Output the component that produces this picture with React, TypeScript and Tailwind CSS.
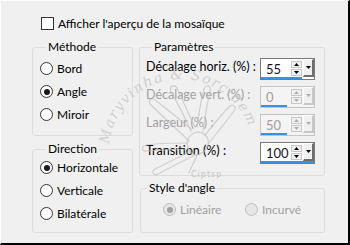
import React from "react";

type RadioProps = { label: string; checked?: boolean; disabled?: boolean };

function Radio({ label, checked, disabled }: RadioProps) {
  return (
    <div className="flex h-[23px] items-center gap-[4px]">
      <span
        className={
          "flex h-[13px] w-[13px] shrink-0 items-center justify-center rounded-full border " +
          (disabled ? "border-[#bcbcbc] bg-[#e6e6e6]" : "border-[#333] bg-white")
        }
      >
        {checked && (
          <span
            className={
              "h-[6px] w-[6px] rounded-full " +
              (disabled ? "bg-[#a0a0a0]" : "bg-[#1a1a1a]")
            }
          />
        )}
      </span>
      <span className={disabled ? "text-[#a0a0a0]" : "text-black"}>{label}</span>
    </div>
  );
}

type GroupProps = { title: string; className: string; children: React.ReactNode };

function Group({ title, className, children }: GroupProps) {
  return (
    <fieldset className={"rounded-[3px] border border-[#dcdcdc] " + className}>
      <legend className="ml-[6px] px-[2px] leading-[14px]">{title}</legend>
      {children}
    </fieldset>
  );
}

type SpinProps = { value: string; bar: number; disabled?: boolean };

function Spin({ value, bar, disabled }: SpinProps) {
  const tri = disabled ? "#b0b0b0" : "#000";
  return (
    <div
      className={
        "flex h-[22px] w-[55px] shrink-0 flex-col border " +
        (disabled ? "border-[#c4c4c4] bg-[#f4f4f4]" : "border-[#7a7a7a] bg-white")
      }
    >
      <div className="flex h-[18px] items-center">
        <span
          className={
            "flex-1 pl-[5px] pt-[2px] text-[13px] leading-[14px] " +
            (disabled ? "text-[#a89c94]" : "text-[#1a1030]")
          }
        >
          {value}
        </span>
        <div className="mr-[1px] flex h-[17px] w-[11px] flex-col justify-center gap-[1px]">
          <div className="flex h-[7px] items-center justify-center border border-[#c8c8c8] bg-[#f0f0f0]">
            <svg width="5" height="3" viewBox="0 0 5 3">
              <path d="M2.5 0 L5 3 L0 3 Z" fill={tri} />
            </svg>
          </div>
          <div className="flex h-[7px] items-center justify-center border border-[#c8c8c8] bg-[#f0f0f0]">
            <svg width="5" height="3" viewBox="0 0 5 3">
              <path d="M0 0 L5 0 L2.5 3 Z" fill={tri} />
            </svg>
          </div>
        </div>
        <div
          className={
            "flex h-[18px] w-[11px] items-center justify-center border-l border-t border-r-2 border-b-2 border-l-white border-t-white bg-[#f0f0f0] " +
            (disabled ? "border-r-[#c8c8c8] border-b-[#c8c8c8]" : "border-r-[#6e6e6e] border-b-[#6e6e6e]")
          }
        >
          <svg width="5" height="3" viewBox="0 0 5 3">
            <path d="M0 0 L5 0 L2.5 3 Z" fill={tri} />
          </svg>
        </div>
      </div>
      <div className="h-[3px] bg-[#3392ea]" style={{ width: bar }} />
    </div>
  );
}

function ParamRow({ label, value, bar, disabled }: { label: string; value: string; bar: number; disabled?: boolean }) {
  return (
    <div className="flex h-[28px] items-center justify-between">
      <span className={"-mt-[3px] whitespace-nowrap text-[12.5px] " + (disabled ? "text-[#a0a0a0]" : "text-black")}>{label}</span>
      <Spin value={value} bar={bar} disabled={disabled} />
    </div>
  );
}

function Watermark() {
  return (
    <svg
      className="pointer-events-none absolute left-0 top-0"
      width="350"
      height="245"
      viewBox="0 0 350 245"
    >
      <defs>
        <path id="wm-arc" d="M108 150 A70 70 0 1 1 252 150" />
      </defs>
      <text
        fill="#bcbcbc"
        fillOpacity="0.65"
        fontFamily="'DejaVu Serif', serif"
        fontStyle="italic"
        fontSize="14"
        letterSpacing="1.5"
      >
        <textPath href="#wm-arc" startOffset="3%">
          Maryvinha &amp; Sorcidem
        </textPath>
      </text>
      <g fill="none" stroke="#c0c0c0" strokeOpacity="0.7" strokeWidth="1.2" strokeLinecap="round">
        <path d="M188 140 C176 128 162 116 150 104 C146 100 150 96 154 99 C166 108 178 118 190 128" />
        <path d="M190 130 C184 116 176 102 170 90 C168 85 173 83 176 87 C182 100 188 114 194 126" />
        <path d="M196 126 C198 112 200 98 203 88 C205 83 210 84 209 90 C206 104 204 116 202 130" />
        <path d="M204 134 C212 124 220 114 228 106 C232 102 236 106 233 110 C224 122 216 132 208 142" />
        <path d="M186 142 C172 142 158 142 146 144 C140 145 140 151 146 150 C160 149 174 148 188 148" />
        <path d="M190 150 C178 156 166 162 154 168 C150 170 152 175 157 173 C170 166 182 160 194 154" />
        <path d="M196 154 C194 160 190 166 188 172" />
        <path d="M186 140 C190 130 200 128 206 136 C210 144 204 152 196 154 C190 154 186 148 186 140 Z" />
      </g>
      <text x="190" y="176" fill="#c4c4c4" fontFamily="'DejaVu Sans', sans-serif" fontSize="8" letterSpacing="1">
        Ciptsp
      </text>
    </svg>
  );
}

export default function App() {
  return (
    <div className="relative h-[245px] w-[350px] overflow-hidden border-l border-t border-b-2 border-r-2 border-l-white border-t-white border-b-black border-r-black bg-[#f0f0f0] font-['Lato',sans-serif] text-[12px] text-black">
      <div className="ml-[40px] mt-[16px] flex h-[13px] items-center gap-[4px]">
        <span className="h-[13px] w-[13px] shrink-0 border border-[#333] bg-white" />
        <span>Afficher l'aperçu de la mosaïque</span>
      </div>

      <div className="ml-[31px] mt-[10px] flex gap-[6px]">
        <div className="flex w-[101px] flex-col gap-[6px]">
          <Group title="Méthode" className="h-[96px] pl-[7px] pt-[3px]">
            <Radio label="Bord" />
            <Radio label="Angle" checked />
            <Radio label="Miroir" />
          </Group>
          <Group title="Direction" className="h-[91px] pl-[7px]">
            <Radio label="Horizontale" checked />
            <Radio label="Verticale" />
            <Radio label="Bilatérale" />
          </Group>
        </div>

        <div className="flex w-[186px] flex-col gap-[5px]">
          <Group title="Paramètres" className="h-[136px] pl-[6px] pr-[9px] pt-[1px]">
            <ParamRow label="Décalage horiz. (%) :" value="55" bar={41} />
            <ParamRow label="Décalage vert. (%) :" value="0" bar={26} disabled />
            <ParamRow label="Largeur (%) :" value="50" bar={26} disabled />
            <ParamRow label="Transition (%) :" value="100" bar={53} />
          </Group>
          <Group title="Style d'angle" className="ml-[1px] h-[52px] pt-[3px]">
            <div className="flex pl-[22px]">
              <div className="w-[82px]">
                <Radio label="Linéaire" checked disabled />
              </div>
              <Radio label="Incurvé" disabled />
            </div>
          </Group>
        </div>
      </div>

      <Watermark />
    </div>
  );
}
